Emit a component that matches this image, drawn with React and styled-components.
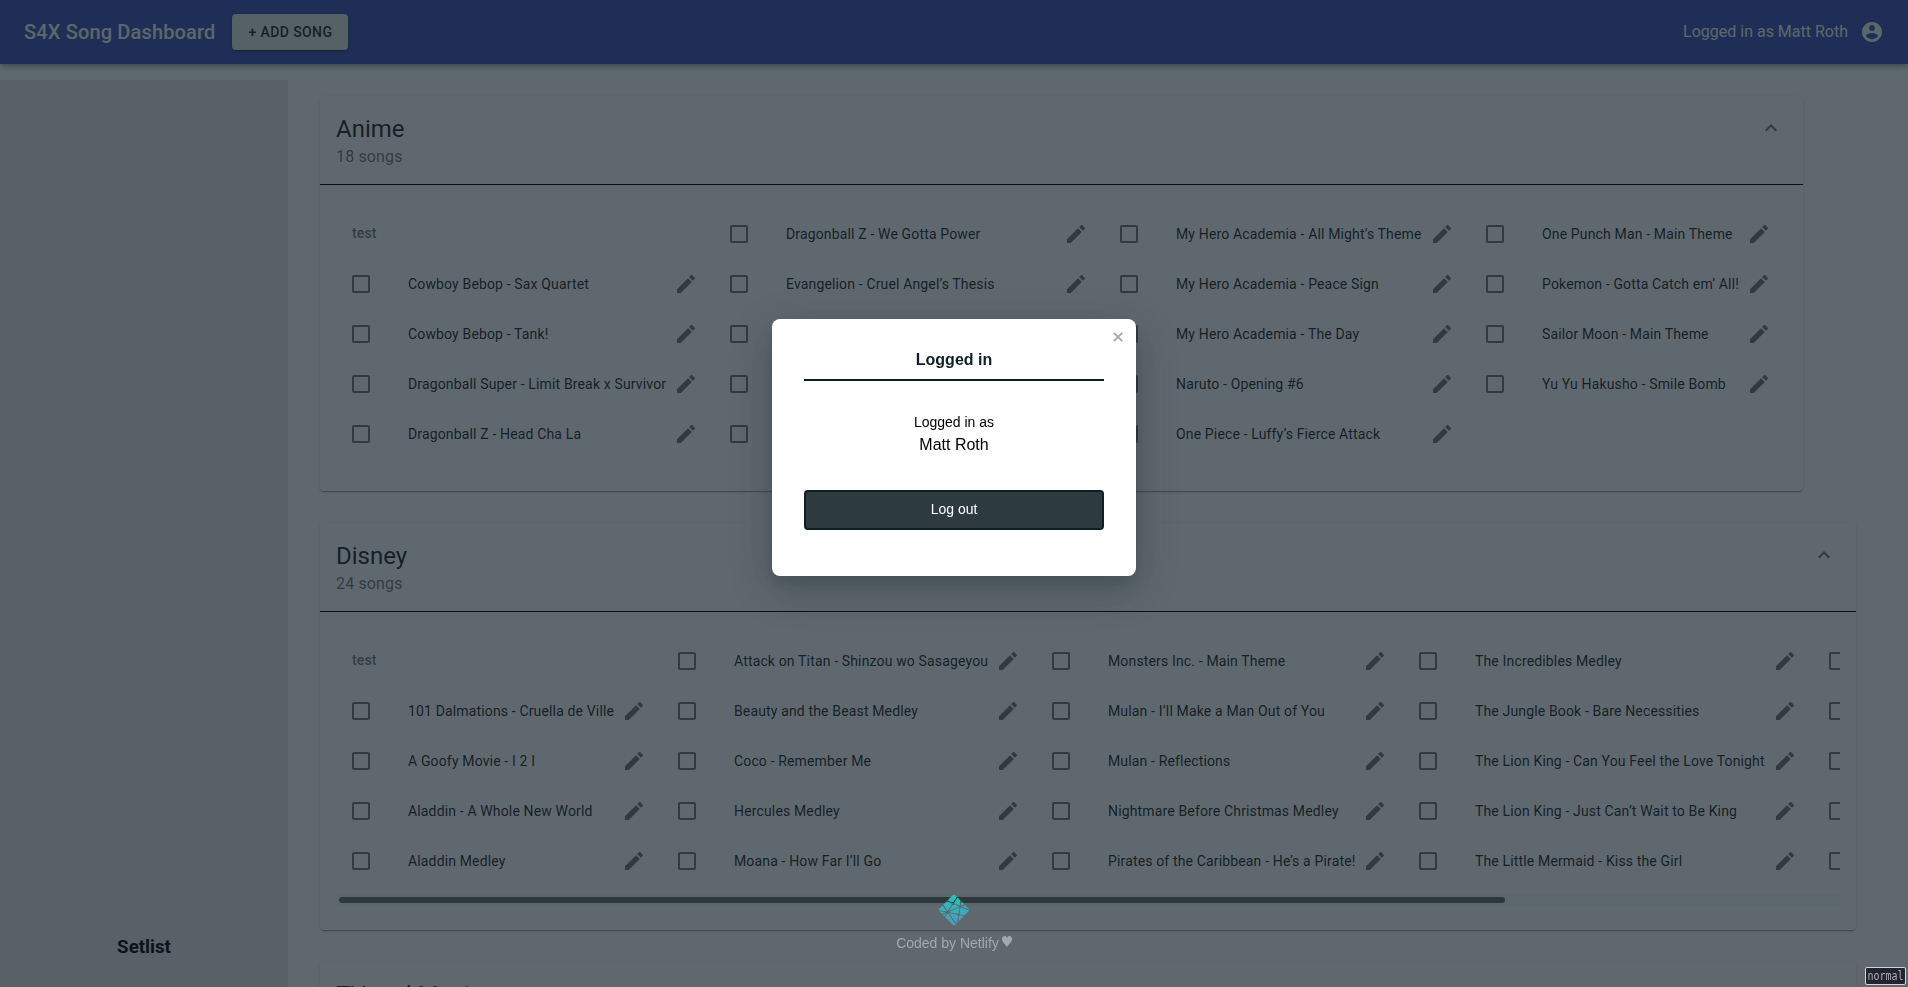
import React from "react";
import styled, { createGlobalStyle } from "styled-components";

const GlobalStyle = createGlobalStyle`
  *, *::before, *::after { box-sizing: border-box; }
  body {
    margin: 0;
    background: #f8fafc;
    color: rgba(0, 0, 0, 0.87);
    font-family: Roboto, "Liberation Sans", sans-serif;
    overflow: hidden;
  }
  h1, h2, h3, p { margin: 0; }
  button { font-family: inherit; cursor: pointer; }
`;

const Page = styled.div`
  height: 100vh;
  display: flex;
  flex-direction: column;
  overflow: hidden;
`;

const AppBar = styled.header`
  flex: none;
  display: flex;
  align-items: center;
  height: 64px;
  padding: 0 24px;
  color: #fff;
  background: #414db8;
  box-shadow: 0 2px 4px -1px rgba(0, 0, 0, 0.2), 0 4px 5px 0 rgba(0, 0, 0, 0.14),
    0 1px 10px 0 rgba(0, 0, 0, 0.12);
`;

const AppTitle = styled.h1`
  color: #f0f2ee;
  font-size: 20px;
  font-weight: 500;
  line-height: 32px;
  letter-spacing: 0.0075em;
  margin-right: 17px;
`;

const AddButton = styled.button`
  height: 36px;
  padding: 6px 16px;
  border: 0;
  border-radius: 4px;
  background: #e0e0e0;
  color: rgba(0, 0, 0, 0.87);
  font-size: 14px;
  font-weight: 500;
  line-height: 24px;
  letter-spacing: 0.02857em;
  text-transform: uppercase;
  box-shadow: 0 3px 1px -2px rgba(0, 0, 0, 0.2), 0 2px 2px 0 rgba(0, 0, 0, 0.14),
    0 1px 5px 0 rgba(0, 0, 0, 0.12);
`;

const Account = styled.div`
  display: flex;
  align-items: center;
  gap: 12px;
  margin-left: auto;
  color: #f0f2ee;
  font-size: 16px;
  line-height: 24px;
`;

const Body = styled.div`
  flex: 1;
  display: flex;
  min-height: 0;
  padding-top: 16px;
`;

const Sidebar = styled.aside`
  flex: none;
  display: flex;
  flex-direction: column;
  justify-content: flex-end;
  width: 288px;
  padding-bottom: 29px;
  background: #e8e2e8;
  text-align: center;
`;

const SidebarTitle = styled.h3`
  color: #000;
  font-size: 18.72px;
  font-weight: 700;
  line-height: 22px;
`;

const Main = styled.main`
  flex: 1;
  min-width: 0;
  display: flex;
  flex-direction: column;
  align-items: flex-start;
  gap: 32px;
  padding: 16px 52px 0 32px;
  background: #fbf5fb;
  overflow: hidden;
`;

const Card = styled.section`
  flex: none;
  width: ${(p) => p.$width}px;
  border-radius: 4px;
  background: #fbf5fb;
  box-shadow: 0 2px 1px -1px rgba(0, 0, 0, 0.2), 0 1px 1px 0 rgba(0, 0, 0, 0.14),
    0 1px 3px 0 rgba(0, 0, 0, 0.12);
`;

const CardHeader = styled.div`
  display: flex;
  justify-content: space-between;
  align-items: flex-start;
  padding: 16px;
  border-bottom: 1px solid #000;
`;

const CardHeading = styled.div`
  height: 56px;
  padding-top: 1px;
`;

const CardTitle = styled.h2`
  font-size: 24px;
  font-weight: 400;
  line-height: 32px;
`;

const CardSubtitle = styled.p`
  font-size: 16px;
  line-height: 24px;
  letter-spacing: 0.00938em;
  color: rgba(0, 0, 0, 0.54);
`;

const ToggleButton = styled.button`
  display: flex;
  padding: 12px;
  margin: -8px -8px 0 0;
  border: 0;
  background: none;
  color: rgba(0, 0, 0, 0.54);
`;

const CardContent = styled.div`
  padding: 16px 16px 24px;
`;

const SongGrid = styled.ul`
  display: grid;
  grid-auto-flow: column;
  grid-template-rows: repeat(5, 50px);
  grid-template-columns: ${(p) => p.$columns.map((c) => `${c}px`).join(" ")};
  margin: 0;
  padding: 8px 0;
  list-style: none;
  overflow: hidden;
`;

const Subheader = styled.li`
  padding-left: 16px;
  font-size: 14px;
  font-weight: 500;
  line-height: 48px;
  letter-spacing: 0.01071em;
  color: rgba(0, 0, 0, 0.54);
`;

const SongItem = styled.li`
  display: flex;
  align-items: center;
  padding: 0 16px 0 13px;
  color: rgba(0, 0, 0, 0.54);
`;

const SongName = styled.span`
  flex: 1;
  min-width: 0;
  padding-left: 35px;
  font-size: 14px;
  line-height: 20px;
  letter-spacing: 0.01071em;
  white-space: nowrap;
  color: rgba(0, 0, 0, 0.87);
`;

const ScrollTrack = styled.div`
  height: 12px;
  padding: 3px;
  background: #f1f4f3;
`;

const ScrollThumb = styled.div`
  width: 1166px;
  height: 6px;
  border-radius: 3px;
  background: #696969;
`;

const Icon = styled.svg`
  flex: none;
  width: 24px;
  height: 24px;
  fill: currentColor;
`;

const Overlay = styled.div`
  position: fixed;
  inset: 0;
  display: flex;
  flex-direction: column;
  align-items: center;
  padding-top: 319px;
  background: rgba(14, 30, 37, 0.66);
  font-family: "Liberation Sans", Arial, sans-serif;
`;

const Dialog = styled.div`
  position: relative;
  width: 364px;
  height: 257px;
  padding: 24px 32px 46px;
  border-radius: 8px;
  background: #fff;
  color: #0e1e25;
  text-align: center;
  box-shadow: 0 8px 8px 0 rgba(14, 30, 37, 0.07), 0 12px 40px 0 rgba(14, 30, 37, 0.32);
`;

const CloseButton = styled.button`
  position: absolute;
  top: 9px;
  right: 9px;
  display: flex;
  align-items: center;
  justify-content: center;
  width: 18px;
  height: 18px;
  padding: 0;
  border: 0;
  background: none;
  color: #a3a9ac;
`;

const DialogTitle = styled.h2`
  height: 38px;
  border-bottom: 2px solid #0e1e25;
  font-size: 16px;
  font-weight: 700;
  line-height: 34px;
`;

const LoginInfo = styled.p`
  padding-top: 30px;
  color: #000;
  font-size: 14px;
  line-height: 22px;
`;

const UserName = styled.span`
  display: block;
  font-size: 16px;
  line-height: 23px;
`;

const LogoutButton = styled.button`
  display: block;
  width: 100%;
  height: 40px;
  margin-top: 34px;
  padding: 0 0 2px;
  border: 2px solid #0e1e25;
  border-radius: 4px;
  background: #2d3b41;
  color: #fff;
  font-size: 14px;
  line-height: 34px;
`;

const Callout = styled.div`
  display: flex;
  flex-direction: column;
  align-items: center;
  margin-top: 318px;
  color: #a3a9ac;
  font-size: 14px;
  line-height: 16px;
`;

const CalloutText = styled.div`
  display: flex;
  align-items: flex-start;
  gap: 3px;
  margin-top: 9px;
`;

const Heart = styled.svg`
  width: 10px;
  height: 11px;
  margin-top: 1px;
  fill: currentColor;
`;

const ModeBadge = styled.div`
  position: fixed;
  right: 2px;
  bottom: 2px;
  width: 41px;
  height: 18px;
  border: 1px solid #d4d4d8;
  border-radius: 2px;
  background: #22242f;
  color: #a9abb8;
  font-family: "DejaVu Sans Mono", monospace;
  font-size: 10px;
  line-height: 16px;
  text-align: center;
`;

const ModeLabel = styled.span`
  display: block;
  transform: scaleY(1.2);
`;

const ACCOUNT =
  "M12 2C6.48 2 2 6.48 2 12s4.48 10 10 10 10-4.48 10-10S17.52 2 12 2zm0 3c1.66 0 3 1.34 3 3s-1.34 3-3 3-3-1.34-3-3 1.34-3 3-3zm0 14.2c-2.5 0-4.71-1.28-6-3.22.03-1.99 4-3.08 6-3.08 1.99 0 5.97 1.09 6 3.08-1.29 1.94-3.5 3.22-6 3.22z";
const CHECKBOX =
  "M19 5v14H5V5h14m0-2H5c-1.1 0-2 .9-2 2v14c0 1.1.9 2 2 2h14c1.1 0 2-.9 2-2V5c0-1.1-.9-2-2-2z";
const PENCIL =
  "M3 17.25V21h3.75L17.81 9.94l-3.75-3.75L3 17.25zM20.71 7.04c.39-.39.39-1.02 0-1.41l-2.34-2.34c-.39-.39-1.02-.39-1.41 0l-1.83 1.83 3.75 3.75 1.83-1.83z";
const COLLAPSE = "M7.41 15.41L12 10.83l4.59 4.58L18 14l-6-6-6 6z";
const NETLIFY =
  "M28.589 14.135l-.014-.006c-.008-.003-.016-.006-.023-.013a.11.11 0 0 1-.028-.093l.773-4.726 3.625 3.626-3.77 1.604a.083.083 0 0 1-.033.006h-.015c-.005-.003-.01-.007-.02-.017a1.716 1.716 0 0 0-.495-.381zm5.258-.288l3.876 3.876c.805.806 1.208 1.208 1.355 1.674.022.069.04.138.054.209l-9.263-3.923a.728.728 0 0 0-.015-.006c-.037-.015-.08-.032-.08-.07 0-.038.044-.056.081-.071l.012-.005 3.96-1.755zm5.127 7.003c-.2.376-.59.766-1.25 1.427l-4.37 4.369-5.652-1.177-.03-.006c-.05-.008-.103-.017-.103-.062a1.706 1.706 0 0 0-.655-1.193c-.023-.023-.017-.059-.01-.092 0-.005 0-.01.002-.014l1.063-6.526.004-.022c.006-.05.015-.108.06-.108a1.73 1.73 0 0 0 1.16-.665c.009-.01.015-.021.027-.027.032-.015.07 0 .103.014l9.651 4.082zm-6.625 6.801l-7.186 7.186 1.23-7.56.002-.01c.001-.01.003-.02.006-.029.01-.024.036-.034.061-.044l.012-.005a1.85 1.85 0 0 0 .695-.517c.024-.028.053-.055.09-.06a.09.09 0 0 1 .029 0l5.06 1.04zm-8.707 8.707l-.81.81-8.955-12.942a.424.424 0 0 0-.01-.014c-.014-.019-.029-.038-.026-.06 0-.016.011-.03.022-.042l.01-.013c.027-.04.05-.08.075-.123l.02-.035.003-.003c.014-.024.027-.047.051-.06.021-.01.05-.006.073-.001l9.921 2.046a.164.164 0 0 1 .076.033c.013.013.016.027.019.043a1.757 1.757 0 0 0 1.028 1.175c.028.014.016.045.003.078a.238.238 0 0 0-.015.045c-.125.76-1.197 7.298-1.485 9.063zm-1.692 1.691c-.597.591-.949.904-1.347 1.03a2 2 0 0 1-1.206 0c-.466-.148-.869-.55-1.674-1.356L8.73 28.73l2.349-3.643c.011-.018.022-.034.04-.047.025-.018.061-.01.091 0a2.434 2.434 0 0 0 1.638-.083c.027-.01.054-.017.075.002a.19.19 0 0 1 .028.032L21.95 38.05zM7.863 27.863L5.8 25.8l4.074-1.738a.084.084 0 0 1 .033-.007c.034 0 .054.034.072.065a2.91 2.91 0 0 0 .13.184l.013.016c.012.017.004.034-.008.05l-2.25 3.493zm-2.976-2.976l-2.61-2.61c-.444-.444-.766-.766-.99-1.043l7.936 1.646a.84.84 0 0 0 .03.005c.049.008.103.017.103.063 0 .05-.059.073-.109.092l-.023.01-4.337 1.837zM.831 19.892a2 2 0 0 1 .09-.495c.148-.466.55-.868 1.356-1.674l3.34-3.34a2175.525 2175.525 0 0 0 4.626 6.687c.027.036.057.076.026.106-.146.161-.292.337-.395.528a.16.16 0 0 1-.05.062c-.013.008-.027.005-.042.002H9.78L.831 19.892zm5.68-6.403l4.491-4.491c.422.185 1.958.834 3.332 1.414 1.04.44 1.988.84 2.286.97.03.012.057.024.07.054.008.018.004.041 0 .06a2.003 2.003 0 0 0 .523 1.828c.03.03 0 .073-.026.11l-.014.021-4.56 7.063c-.012.02-.023.037-.043.05-.024.015-.058.008-.086.001a2.274 2.274 0 0 0-.543-.074c-.164 0-.342.03-.522.063h-.001c-.02.003-.038.007-.054-.005a.21.21 0 0 1-.045-.051l-4.808-7.013zm5.398-5.398l5.814-5.814c.805-.805 1.208-1.208 1.674-1.355a2 2 0 0 1 1.206 0c.466.147.869.55 1.674 1.355l1.26 1.26-4.135 6.404a.155.155 0 0 1-.041.048c-.025.017-.06.01-.09 0a2.097 2.097 0 0 0-1.92.37c-.027.028-.067.012-.101-.003-.54-.235-4.74-2.01-5.341-2.265zm12.506-3.676l3.818 3.818-.92 5.698v.015a.135.135 0 0 1-.008.038c-.01.02-.03.024-.05.03a1.83 1.83 0 0 0-.548.273.154.154 0 0 0-.02.017c-.011.012-.022.023-.04.025a.114.114 0 0 1-.043-.007l-5.818-2.472-.011-.005c-.037-.015-.081-.033-.081-.071a2.198 2.198 0 0 0-.31-.915c-.028-.046-.059-.094-.035-.141l4.066-6.303zm-3.932 8.606l5.454 2.31c.03.014.063.027.076.058a.106.106 0 0 1 0 .057c-.016.08-.03.171-.03.263v.153c0 .038-.039.054-.075.069l-.011.004c-.864.369-12.13 5.173-12.147 5.173-.017 0-.035 0-.052-.017-.03-.03 0-.072.027-.11a.76.76 0 0 0 .014-.02l4.482-6.94.008-.012c.026-.042.056-.089.104-.089l.045.007c.102.014.192.027.283.027.68 0 1.31-.331 1.69-.897a.16.16 0 0 1 .034-.04c.027-.02.067-.01.098.004zm-6.246 9.185l12.28-5.237s.018 0 .035.017c.067.067.124.112.179.154l.027.017c.025.014.05.03.052.056 0 .01 0 .016-.002.025L25.756 23.7l-.004.026c-.007.05-.014.107-.061.107a1.729 1.729 0 0 0-1.373.847l-.005.008c-.014.023-.027.045-.05.057-.021.01-.048.006-.07.001l-9.793-2.02c-.01-.002-.152-.519-.163-.52z";

const MuiIcon = ({ d }) => (
  <Icon viewBox="0 0 24 24" aria-hidden="true">
    <path d={d} />
  </Icon>
);

const CATEGORIES = [
  {
    title: "Anime",
    count: 18,
    width: 1483,
    columns: [378, 390, 366, 317],
    songs: [
      "Cowboy Bebop - Sax Quartet",
      "Cowboy Bebop - Tank!",
      "Dragonball Super - Limit Break x Survivor",
      "Dragonball Z - Head Cha La",
      "Dragonball Z - We Gotta Power",
      "Evangelion - Cruel Angel’s Thesis",
      "",
      "",
      "",
      "My Hero Academia - All Might’s Theme",
      "My Hero Academia - Peace Sign",
      "My Hero Academia - The Day",
      "Naruto - Opening #6",
      "One Piece - Luffy’s Fierce Attack",
      "One Punch Man - Main Theme",
      "Pokemon - Gotta Catch em’ All!",
      "Sailor Moon - Main Theme",
      "Yu Yu Hakusho - Smile Bomb",
    ],
  },
  {
    title: "Disney",
    count: 24,
    width: 1536,
    columns: [326, 374, 367, 410, 300],
    scroll: true,
    songs: [
      "101 Dalmations - Cruella de Ville",
      "A Goofy Movie - I 2 I",
      "Aladdin - A Whole New World",
      "Aladdin Medley",
      "Attack on Titan - Shinzou wo Sasageyou",
      "Beauty and the Beast Medley",
      "Coco - Remember Me",
      "Hercules Medley",
      "Moana - How Far I’ll Go",
      "Monsters Inc. - Main Theme",
      "Mulan - I’ll Make a Man Out of You",
      "Mulan - Reflections",
      "Nightmare Before Christmas Medley",
      "Pirates of the Caribbean - He’s a Pirate!",
      "The Incredibles Medley",
      "The Jungle Book - Bare Necessities",
      "The Lion King - Can You Feel the Love Tonight",
      "The Lion King - Just Can’t Wait to Be King",
      "The Little Mermaid - Kiss the Girl",
      "",
      "",
      "",
      "",
      "",
    ],
  },
  { title: "TV and Movies", width: 1536, columns: [], songs: [] },
];

const Category = ({ title, count, width, columns, songs, scroll }) => (
  <Card $width={width}>
    <CardHeader>
      <CardHeading>
        <CardTitle>{title}</CardTitle>
        {count && <CardSubtitle>{count} songs</CardSubtitle>}
      </CardHeading>
      <ToggleButton aria-label="Collapse">
        <MuiIcon d={COLLAPSE} />
      </ToggleButton>
    </CardHeader>
    {songs.length > 0 && (
      <CardContent>
        <SongGrid $columns={columns}>
          <Subheader>test</Subheader>
          {songs.map((song, i) => (
            <SongItem key={i}>
              <MuiIcon d={CHECKBOX} />
              <SongName>{song}</SongName>
              <MuiIcon d={PENCIL} />
            </SongItem>
          ))}
        </SongGrid>
        {scroll && (
          <ScrollTrack>
            <ScrollThumb />
          </ScrollTrack>
        )}
      </CardContent>
    )}
  </Card>
);

export default function App() {
  return (
    <>
      <GlobalStyle />
      <Page>
        <AppBar>
          <AppTitle>S4X Song Dashboard</AppTitle>
          <AddButton>+ Add Song</AddButton>
          <Account>
            Logged in as Matt Roth
            <MuiIcon d={ACCOUNT} />
          </Account>
        </AppBar>
        <Body>
          <Sidebar>
            <SidebarTitle>Setlist</SidebarTitle>
          </Sidebar>
          <Main>
            {CATEGORIES.map((category) => (
              <Category key={category.title} {...category} />
            ))}
          </Main>
        </Body>
      </Page>
      <Overlay>
        <Dialog role="dialog">
          <CloseButton aria-label="Close">
            <svg width="10" height="10" viewBox="0 0 10 10" stroke="currentColor" strokeWidth="1.9">
              <path d="M.8.8l8.4 8.4M9.2.8L.8 9.2" />
            </svg>
          </CloseButton>
          <DialogTitle>Logged in</DialogTitle>
          <LoginInfo>
            Logged in as
            <UserName>Matt Roth</UserName>
          </LoginInfo>
          <LogoutButton>Log out</LogoutButton>
        </Dialog>
        <Callout>
          <svg width="32" height="32" viewBox="0 0 40 40">
            <defs>
              <radialGradient
                id="netlify"
                cy="0%"
                r="100%"
                fx="50%"
                fy="0%"
                gradientTransform="matrix(0 .9989 -1.152 0 .5 -.5)"
              >
                <stop offset="0%" stopColor="#20C6B7" />
                <stop offset="100%" stopColor="#4D9ABF" />
              </radialGradient>
            </defs>
            <path fill="url(#netlify)" fillRule="evenodd" d={NETLIFY} />
          </svg>
          <CalloutText>
            Coded by Netlify
            <Heart viewBox="0 0 10 11">
              <path d="M5 11C4.300 8.800 0 6.300 0 2.900 0 1.200 1.100 0 2.600 0 3.800 0 4.600.8 5 1.900 5.400.8 6.200 0 7.400 0 8.900 0 10 1.200 10 2.900 10 6.300 5.700 8.800 5 11z" />
            </Heart>
          </CalloutText>
        </Callout>
      </Overlay>
      <ModeBadge>
        <ModeLabel>normal</ModeLabel>
      </ModeBadge>
    </>
  );
}
